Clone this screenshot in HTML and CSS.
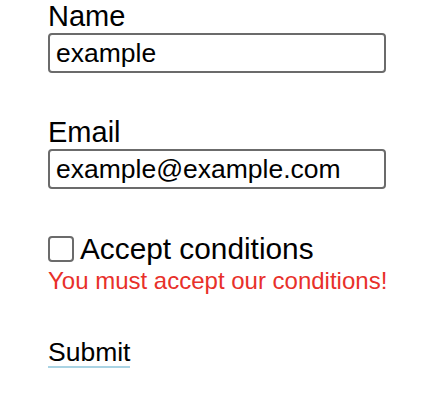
FILE: index.html
```html
<!DOCTYPE html>
<html>
<head>
<meta charset="utf-8">
<link rel="stylesheet" href="styles.css">
</head>
<body>
<form class="form">
  <div class="field">
    <label class="label" for="name">Name</label>
    <input class="input" id="name" type="text" value="example">
  </div>
  <div class="field">
    <label class="label" for="email">Email</label>
    <input class="input" id="email" type="text" value="example@example.com">
  </div>
  <div class="field">
    <label class="check-row"><input class="checkbox" type="checkbox"><span>Accept conditions</span></label>
    <div class="error">You must accept our conditions!</div>
  </div>
  <button class="submit" type="button">Submit</button>
</form>
</body>
</html>
```
FILE: styles.css
```css
html, body {
  margin: 0;
  padding: 0;
  background: #fff;
}
body {
  font-family: "Liberation Sans", Arial, sans-serif;
  color: #000;
}
.form {
  display: flex;
  flex-direction: column;
  align-items: flex-start;
  padding-left: 48px;
}
.field {
  display: flex;
  flex-direction: column;
  align-items: flex-start;
  margin-bottom: 43px;
}
.label {
  font-size: 29px;
  line-height: 32px;
}
.input {
  box-sizing: border-box;
  width: 338px;
  height: 40px;
  border: 2px solid #6b6b6b;
  border-radius: 4px;
  padding: 0 6px;
  margin: 1px 0 0;
  font-family: "Liberation Sans", Arial, sans-serif;
  font-size: 26.5px;
  color: #000;
  outline: none;
}
.check-row {
  display: flex;
  align-items: center;
  gap: 6px;
  font-size: 29.8px;
  line-height: 32px;
  margin-top: 1px;
}
.checkbox {
  appearance: none;
  -webkit-appearance: none;
  box-sizing: border-box;
  width: 26px;
  height: 26px;
  margin: 0;
  border: 2px solid #6b6b6b;
  border-radius: 4px;
  background: #fff;
}
.error {
  color: #e8302a;
  font-size: 24px;
  line-height: 28px;
  margin-top: 2px;
}
.submit {
  appearance: none;
  background: none;
  border: 0;
  padding: 0;
  margin: 0;
  font-family: "Liberation Sans", Arial, sans-serif;
  font-size: 26.5px;
  line-height: 28px;
  color: #000;
  border-bottom: 2px solid #a9d3e3;
}
```
